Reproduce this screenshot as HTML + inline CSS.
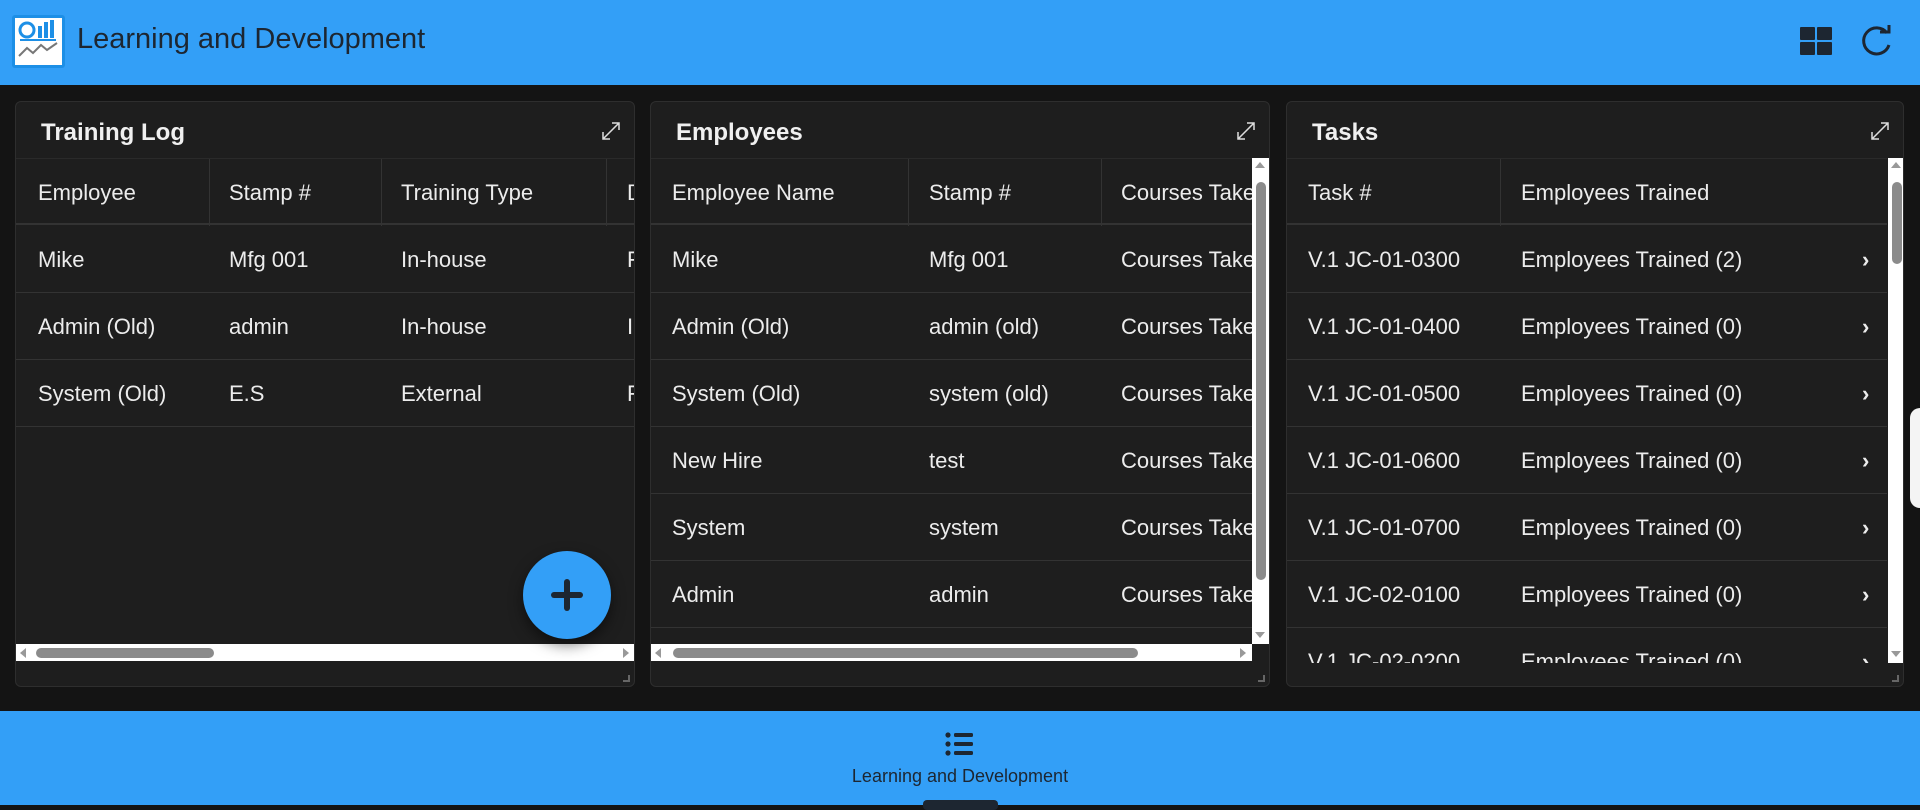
<!DOCTYPE html>
<html><head><meta charset="utf-8"><style>
*{box-sizing:border-box;margin:0;padding:0}
body{width:1920px;height:805px;overflow:hidden;background:#141414;font-family:"Liberation Sans",sans-serif;color:#ececec;position:relative}
.hdr{position:absolute;left:0;top:0;width:1920px;height:85px;background:#339ff7}
.logo{position:absolute;left:12px;top:15px;width:53px;height:53px;background:#fff;border:3px solid #1d8fe6;border-radius:3px}
.ttl{position:absolute;left:77px;top:23px;font-size:29px;color:#1d2631}
.foot{position:absolute;left:0;top:711px;width:1920px;height:94px;background:#339ff7}
.panel{position:absolute;top:101px;height:586px;background:#1e1e1e;border:1px solid #2e2e2e;border-radius:6px;overflow:hidden}
.ptitle{position:absolute;left:25px;top:17px;font-size:24px;font-weight:bold;color:#f0f0f0}
.exp{position:absolute;right:12px;top:18px}
.row{position:absolute;left:0;height:67px;border-bottom:1px solid #333;font-size:22px}
.row span{position:absolute;top:21px;white-space:nowrap}
.th{border-top:1px solid #2a2a2a;border-bottom:2px solid #333}
.vl{position:absolute;top:0;height:67px;border-left:1px solid #333}
.hs{position:absolute;left:0;top:542px;height:17px;background:#fff}
.thumb{position:absolute;top:4px;height:10px;background:#8b8b8b;border-radius:5px}
.vs{position:absolute;width:17px;background:#fff}
.vthumb{position:absolute;left:4px;width:10px;background:#8b8b8b;border-radius:5px}
.corner{position:absolute;right:4px;bottom:4px;width:7px;height:7px;border-right:2px solid #666;border-bottom:2px solid #666}
.chev{position:absolute;right:0;top:20px;font-weight:bold}
.al{position:absolute;top:4px;width:0;height:0;border-top:5px solid transparent;border-bottom:5px solid transparent}
.au{position:absolute;left:3px;width:0;height:0;border-left:5px solid transparent;border-right:5px solid transparent}
</style></head><body>
<div class="hdr">
 <div class="logo"><svg width="47" height="47" viewBox="0 0 47 47"><circle cx="12" cy="12" r="7" fill="none" stroke="#1d8fe6" stroke-width="3"/><rect x="23" y="8" width="4" height="12" fill="#1d8fe6"/><rect x="29" y="4" width="4" height="16" fill="#1d8fe6"/><rect x="35" y="2" width="4" height="18" fill="#1d8fe6"/><rect x="5" y="21" width="36" height="2" fill="#1d8fe6"/><polyline points="4,38 12,30 18,35 26,27 32,32 42,25" fill="none" stroke="#777" stroke-width="2"/></svg></div>
 <div class="ttl">Learning and Development</div>
 <svg style="position:absolute;left:1800px;top:27px" width="32" height="28" viewBox="0 0 32 28"><rect x="0" y="0" width="15" height="13" rx="1" fill="#1d2631"/><rect x="17" y="0" width="15" height="13" rx="1" fill="#1d2631"/><rect x="0" y="15" width="15" height="13" rx="1" fill="#1d2631"/><rect x="17" y="15" width="15" height="13" rx="1" fill="#1d2631"/></svg>
 <svg style="position:absolute;left:1860px;top:25px" width="34" height="32" viewBox="0 0 34 32"><path d="M27 8 A13 13 0 1 0 29 20" fill="none" stroke="#1d2631" stroke-width="3"/><path d="M20 7 L29 7 L29 -1" fill="none" stroke="#1d2631" stroke-width="3"/></svg>
</div>

<div class="panel" style="left:15px;width:620px">
 <div class="ptitle">Training Log</div>
 <svg class="exp" width="22" height="22" viewBox="0 0 22 22"><path d="M3 19 L19 3 M12 3 H19 V10 M3 12 V19 H10" fill="none" stroke="#ddd" stroke-width="1.5"/></svg>
 <div class="row th" style="top:56px;width:620px"><span style="left:22px">Employee</span><div class="vl" style="left:193px"></div><span style="left:213px">Stamp #</span><div class="vl" style="left:365px"></div><span style="left:385px">Training Type</span><div class="vl" style="left:590px"></div><span style="left:611px">D</span></div>
 <div class="row" style="top:124px;width:620px"><span style="left:22px">Mike</span><span style="left:213px">Mfg 001</span><span style="left:385px">In-house</span><span style="left:611px">F</span></div>
 <div class="row" style="top:191px;width:620px"><span style="left:22px">Admin (Old)</span><span style="left:213px">admin</span><span style="left:385px">In-house</span><span style="left:611px">I</span></div>
 <div class="row" style="top:258px;width:620px"><span style="left:22px">System (Old)</span><span style="left:213px">E.S</span><span style="left:385px">External</span><span style="left:611px">F</span></div>
 <div class="hs" style="width:620px"><div class="al" style="left:4px;border-right:6px solid #999"></div><div class="thumb" style="left:20px;width:178px"></div><div class="al" style="left:607px;border-left:6px solid #999"></div></div>
 <div style="position:absolute;left:507px;top:449px;width:88px;height:88px;border-radius:50%;background:#339ff7;box-shadow:0 6px 14px rgba(0,0,0,.5)"><div style="position:absolute;left:28px;top:41px;width:32px;height:6px;background:#1d2631;border-radius:3px"></div><div style="position:absolute;left:41px;top:28px;width:6px;height:32px;background:#1d2631;border-radius:3px"></div></div>
 <div class="corner"></div>
</div>

<div class="panel" style="left:650px;width:620px">
 <div class="ptitle">Employees</div>
 <svg class="exp" width="22" height="22" viewBox="0 0 22 22"><path d="M3 19 L19 3 M12 3 H19 V10 M3 12 V19 H10" fill="none" stroke="#ddd" stroke-width="1.5"/></svg>
 <div class="row th" style="top:56px;width:601px"><span style="left:21px">Employee Name</span><div class="vl" style="left:257px"></div><span style="left:278px">Stamp #</span><div class="vl" style="left:450px"></div><span style="left:470px">Courses Take</span></div>
 <div class="row" style="top:124px;width:601px"><span style="left:21px">Mike</span><span style="left:278px">Mfg 001</span><span style="left:470px">Courses Take</span></div>
 <div class="row" style="top:191px;width:601px"><span style="left:21px">Admin (Old)</span><span style="left:278px">admin (old)</span><span style="left:470px">Courses Take</span></div>
 <div class="row" style="top:258px;width:601px"><span style="left:21px">System (Old)</span><span style="left:278px">system (old)</span><span style="left:470px">Courses Take</span></div>
 <div class="row" style="top:325px;width:601px"><span style="left:21px">New Hire</span><span style="left:278px">test</span><span style="left:470px">Courses Take</span></div>
 <div class="row" style="top:392px;width:601px"><span style="left:21px">System</span><span style="left:278px">system</span><span style="left:470px">Courses Take</span></div>
 <div class="row" style="top:459px;width:601px"><span style="left:21px">Admin</span><span style="left:278px">admin</span><span style="left:470px">Courses Take</span></div>
 <div class="vs" style="left:601px;top:56px;height:486px"><div class="au" style="top:4px;border-bottom:6px solid #999"></div><div class="vthumb" style="top:24px;height:398px"></div><div class="au" style="top:474px;border-top:6px solid #999"></div></div>
 <div class="hs" style="width:601px"><div class="al" style="left:4px;border-right:6px solid #999"></div><div class="thumb" style="left:22px;width:465px"></div><div class="al" style="left:589px;border-left:6px solid #999"></div></div>
 <div class="corner"></div>
</div>

<div class="panel" style="left:1286px;width:618px">
 <div class="ptitle">Tasks</div>
 <svg class="exp" width="22" height="22" viewBox="0 0 22 22"><path d="M3 19 L19 3 M12 3 H19 V10 M3 12 V19 H10" fill="none" stroke="#ddd" stroke-width="1.5"/></svg>
 <div style="position:absolute;left:0;top:56px;width:600px;height:505px;overflow:hidden">
 <div class="row th" style="top:0;width:600px"><span style="left:21px">Task #</span><div class="vl" style="left:213px"></div><span style="left:234px">Employees Trained</span></div>
 <div class="row" style="top:68px;width:600px"><span style="left:21px">V.1 JC-01-0300</span><span style="left:234px">Employees Trained (2)</span><span class="chev" style="left:575px">›</span></div>
 <div class="row" style="top:135px;width:600px"><span style="left:21px">V.1 JC-01-0400</span><span style="left:234px">Employees Trained (0)</span><span class="chev" style="left:575px">›</span></div>
 <div class="row" style="top:202px;width:600px"><span style="left:21px">V.1 JC-01-0500</span><span style="left:234px">Employees Trained (0)</span><span class="chev" style="left:575px">›</span></div>
 <div class="row" style="top:269px;width:600px"><span style="left:21px">V.1 JC-01-0600</span><span style="left:234px">Employees Trained (0)</span><span class="chev" style="left:575px">›</span></div>
 <div class="row" style="top:336px;width:600px"><span style="left:21px">V.1 JC-01-0700</span><span style="left:234px">Employees Trained (0)</span><span class="chev" style="left:575px">›</span></div>
 <div class="row" style="top:403px;width:600px"><span style="left:21px">V.1 JC-02-0100</span><span style="left:234px">Employees Trained (0)</span><span class="chev" style="left:575px">›</span></div>
 <div class="row" style="top:470px;width:600px"><span style="left:21px">V.1 JC-02-0200</span><span style="left:234px">Employees Trained (0)</span><span class="chev" style="left:575px">›</span></div>
 </div>
 <div class="vs" style="left:601px;top:56px;height:505px"><div class="au" style="top:4px;border-bottom:6px solid #999"></div><div class="vthumb" style="top:24px;height:82px"></div><div class="au" style="top:493px;border-top:6px solid #999"></div></div>
 <div class="corner"></div>
</div>

<div style="position:absolute;left:1910px;top:408px;width:20px;height:100px;background:#f4f4f4;border-radius:10px"></div>

<div class="foot">
 <svg style="position:absolute;left:945px;top:21px" width="30" height="24" viewBox="0 0 30 24"><circle cx="3" cy="3" r="2.6" fill="#1d2631"/><circle cx="3" cy="12" r="2.6" fill="#1d2631"/><circle cx="3" cy="21" r="2.6" fill="#1d2631"/><rect x="9" y="1" width="19" height="4" rx="1.5" fill="#1d2631"/><rect x="9" y="10" width="19" height="4" rx="1.5" fill="#1d2631"/><rect x="9" y="19" width="19" height="4" rx="1.5" fill="#1d2631"/></svg>
 <div style="position:absolute;left:0;width:1920px;top:55px;text-align:center;font-size:18px;color:#1d2631">Learning and Development</div>
 <div style="position:absolute;left:923px;top:89px;width:75px;height:10px;background:#1d2631;border-radius:4px"></div>
</div>
</body></html>
